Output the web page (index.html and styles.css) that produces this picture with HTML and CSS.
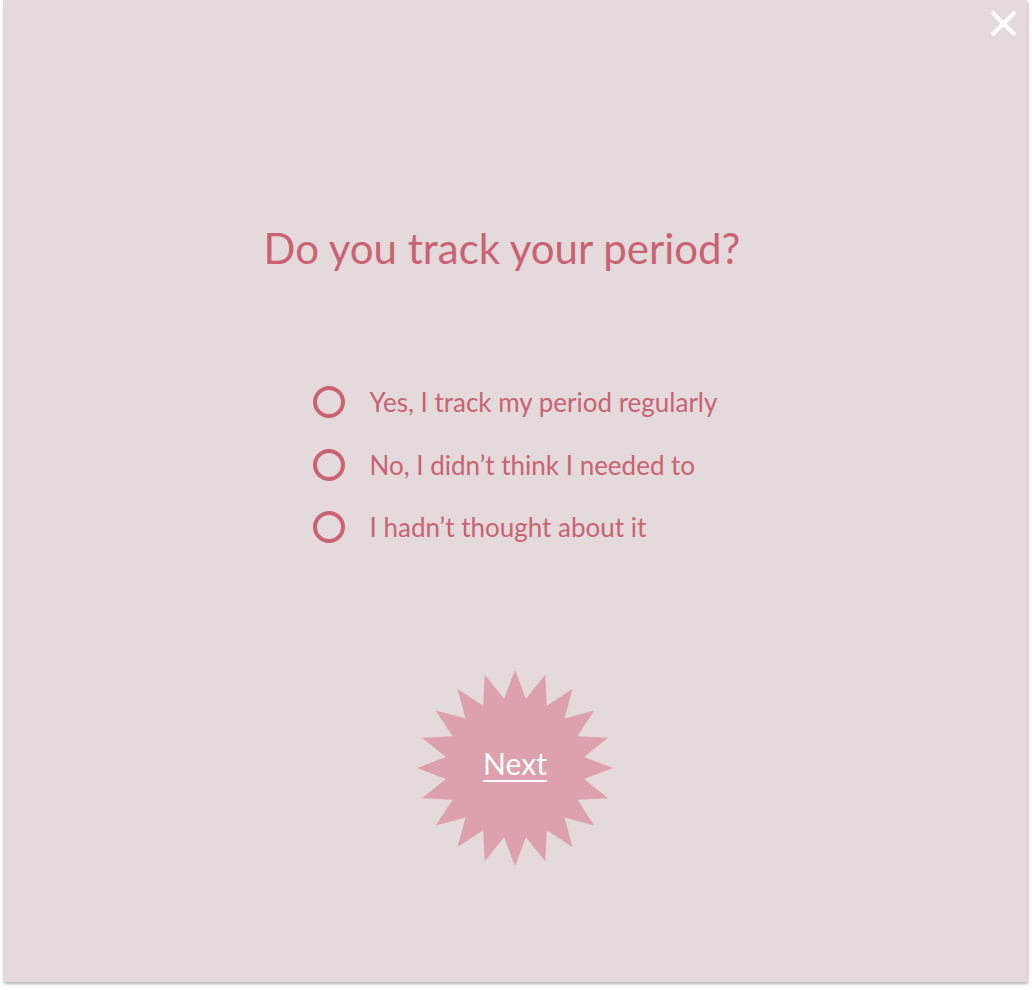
FILE: index.html
```html
<!DOCTYPE html>
<html lang="en">
<head>
<meta charset="utf-8">
<title>Do you track your period?</title>
<link rel="stylesheet" href="styles.css">
</head>
<body>
<div class="panel">
  <button class="close" aria-label="Close">
    <svg width="27" height="27" viewBox="0 0 27 27"><path d="M2 2L25 25M25 2L2 25" stroke="#fff" stroke-width="4" fill="none"/></svg>
  </button>
  <h1 class="title">Do you track your period?</h1>
  <ul class="options">
    <li class="option"><span class="radio"></span><span class="label">Yes, I track my period regularly</span></li>
    <li class="option"><span class="radio"></span><span class="label">No, I didn’t think I needed to</span></li>
    <li class="option"><span class="radio"></span><span class="label">I hadn’t thought about it</span></li>
  </ul>
  <div class="next">
    <svg class="star" width="196" height="196" viewBox="0 0 196 196"><polygon fill="#dca1ac" points="98,0 108.95,28.86 128.28,4.79 129.78,35.63 155.6,18.72 147.5,48.5 177.28,40.4 160.37,66.22 191.21,67.72 167.14,87.05 196,98 167.14,108.95 191.21,128.28 160.37,129.78 177.28,155.6 147.5,147.5 155.6,177.28 129.78,160.37 128.28,191.21 108.95,167.14 98,196 87.05,167.14 67.72,191.21 66.22,160.37 40.4,177.28 48.5,147.5 18.72,155.6 35.63,129.78 4.79,128.28 28.86,108.95 0,98 28.86,87.05 4.79,67.72 35.63,66.22 18.72,40.4 48.5,48.5 40.4,18.72 66.22,35.63 67.72,4.79 87.05,28.86"/></svg>
    <a class="next-link" href="#">Next</a>
  </div>
</div>
</body>
</html>
```
FILE: styles.css
```css
html, body {
  margin: 0;
  padding: 0;
  background: #ffffff;
}
body {
  font-family: Lato, "Open Sans", sans-serif;
  padding-bottom: 8px;
}
.panel {
  position: relative;
  margin-left: 3px;
  width: 1024px;
  height: 982px;
  background: #e4d9db;
  box-shadow: 1px 2px 3px rgba(0, 0, 0, 0.3);
  display: flex;
  flex-direction: column;
  align-items: center;
  box-sizing: border-box;
  padding-top: 224px;
}
.close {
  position: absolute;
  top: 10px;
  right: 10px;
  width: 27px;
  height: 27px;
  padding: 0;
  border: 0;
  background: none;
  display: block;
}
.close svg { display: block; }
.title {
  margin: 0;
  padding-right: 26px;
  font-weight: 400;
  font-size: 42px;
  line-height: 48px;
  color: #c96373;
}
.options {
  list-style: none;
  margin: 99px 0 0 0;
  padding: 0;
  display: flex;
  flex-direction: column;
  align-items: flex-start;
}
.option {
  height: 62.5px;
  display: flex;
  align-items: center;
  gap: 25px;
}
.radio {
  width: 32px;
  height: 32px;
  box-sizing: border-box;
  border: 4px solid #c96373;
  border-radius: 50%;
}
.label {
  font-size: 26px;
  color: #c96373;
}
.next {
  margin-top: 111.5px;
  display: grid;
  place-items: center;
}
.next > * {
  grid-area: 1 / 1;
}
.star { display: block; }
.next-link {
  color: #ffffff;
  font-size: 30px;
  line-height: 36px;
  margin-bottom: 10px;
  text-decoration: underline;
  text-decoration-thickness: 1.5px;
  text-underline-offset: 5px;
}
```
